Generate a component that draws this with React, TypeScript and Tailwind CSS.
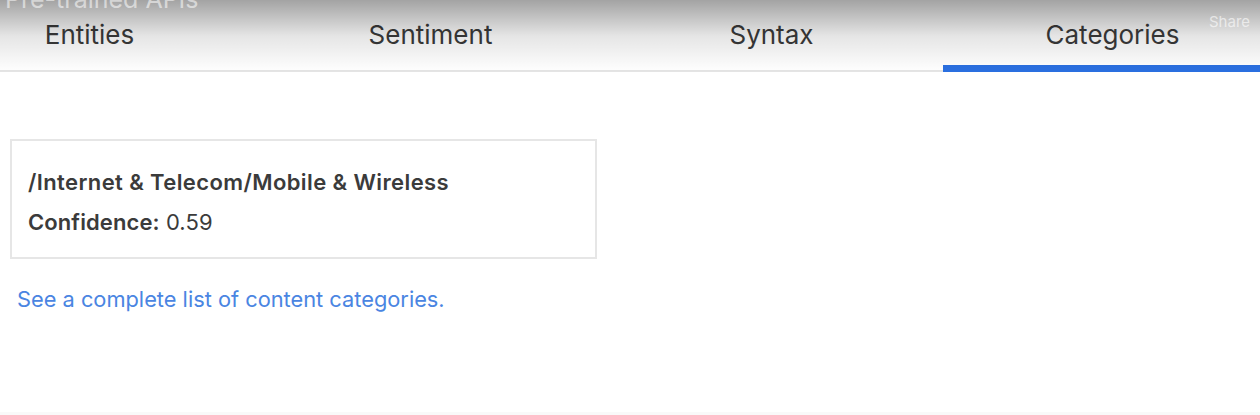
import React from 'react';

const tabs = ['Entities', 'Sentiment', 'Syntax', 'Categories'];

export default function App() {
  const active = 'Categories';
  return (
    <div className="relative w-[1260px] h-[415px] overflow-hidden bg-white font-['Inter',_'Liberation_Sans',_sans-serif]">
      {/* tab bar */}
      <div className="relative border-b-2 border-[#e4e4e4]">
        <div className="flex -ml-[81px]">
          {tabs.map((t) => (
            <div key={t} className="relative shrink-0 w-[341px] h-[70px] flex items-start justify-center pt-[19px]">
              <span className="text-[26px] leading-[32px] text-[#3a3a3a]">{t}</span>
              {t === active && <div className="absolute left-px right-0 -bottom-[2px] h-[7px] bg-[#2a6fe0]" />}
            </div>
          ))}
        </div>
      </div>

      {/* content */}
      <div className="pt-[67px] pl-[10px]">
        <div className="w-[587px] border-2 border-[#e6e6e6] px-[16px] pt-[27px] pb-[21px]">
          <div className="text-[22px] leading-[28px] font-semibold tracking-[0.4px] text-[#3b3b3b]">/Internet &amp; Telecom/Mobile &amp; Wireless</div>
          <div className="mt-[12px] text-[22px] leading-[28px] tracking-[0.1px] text-[#3b3b3b]">
            <span className="font-semibold">Confidence:</span> 0.59
          </div>
        </div>
        <a className="block mt-[26px] ml-[7px] text-[21.8px] leading-[28px] text-[#4a85e2]">See a complete list of content categories.</a>
      </div>

      <div className="absolute left-0 right-0 bottom-0 h-[3px] bg-[#f9f9f9]" />

      {/* video overlay gradient */}
      <div className="pointer-events-none absolute inset-x-0 top-0 h-[72px] bg-gradient-to-b from-[rgba(0,0,0,0.36)] via-[rgba(0,0,0,0.1)] to-transparent" />
      <div className="pointer-events-none absolute left-[5px] -top-[16px] text-[25px] leading-[30px] text-[rgba(255,255,255,0.55)]">Pre-trained APIs</div>
      <div className="pointer-events-none absolute left-[1209px] top-[12px] text-[15px] leading-[20px] text-[rgba(255,255,255,0.6)]">Share</div>
    </div>
  );
}
